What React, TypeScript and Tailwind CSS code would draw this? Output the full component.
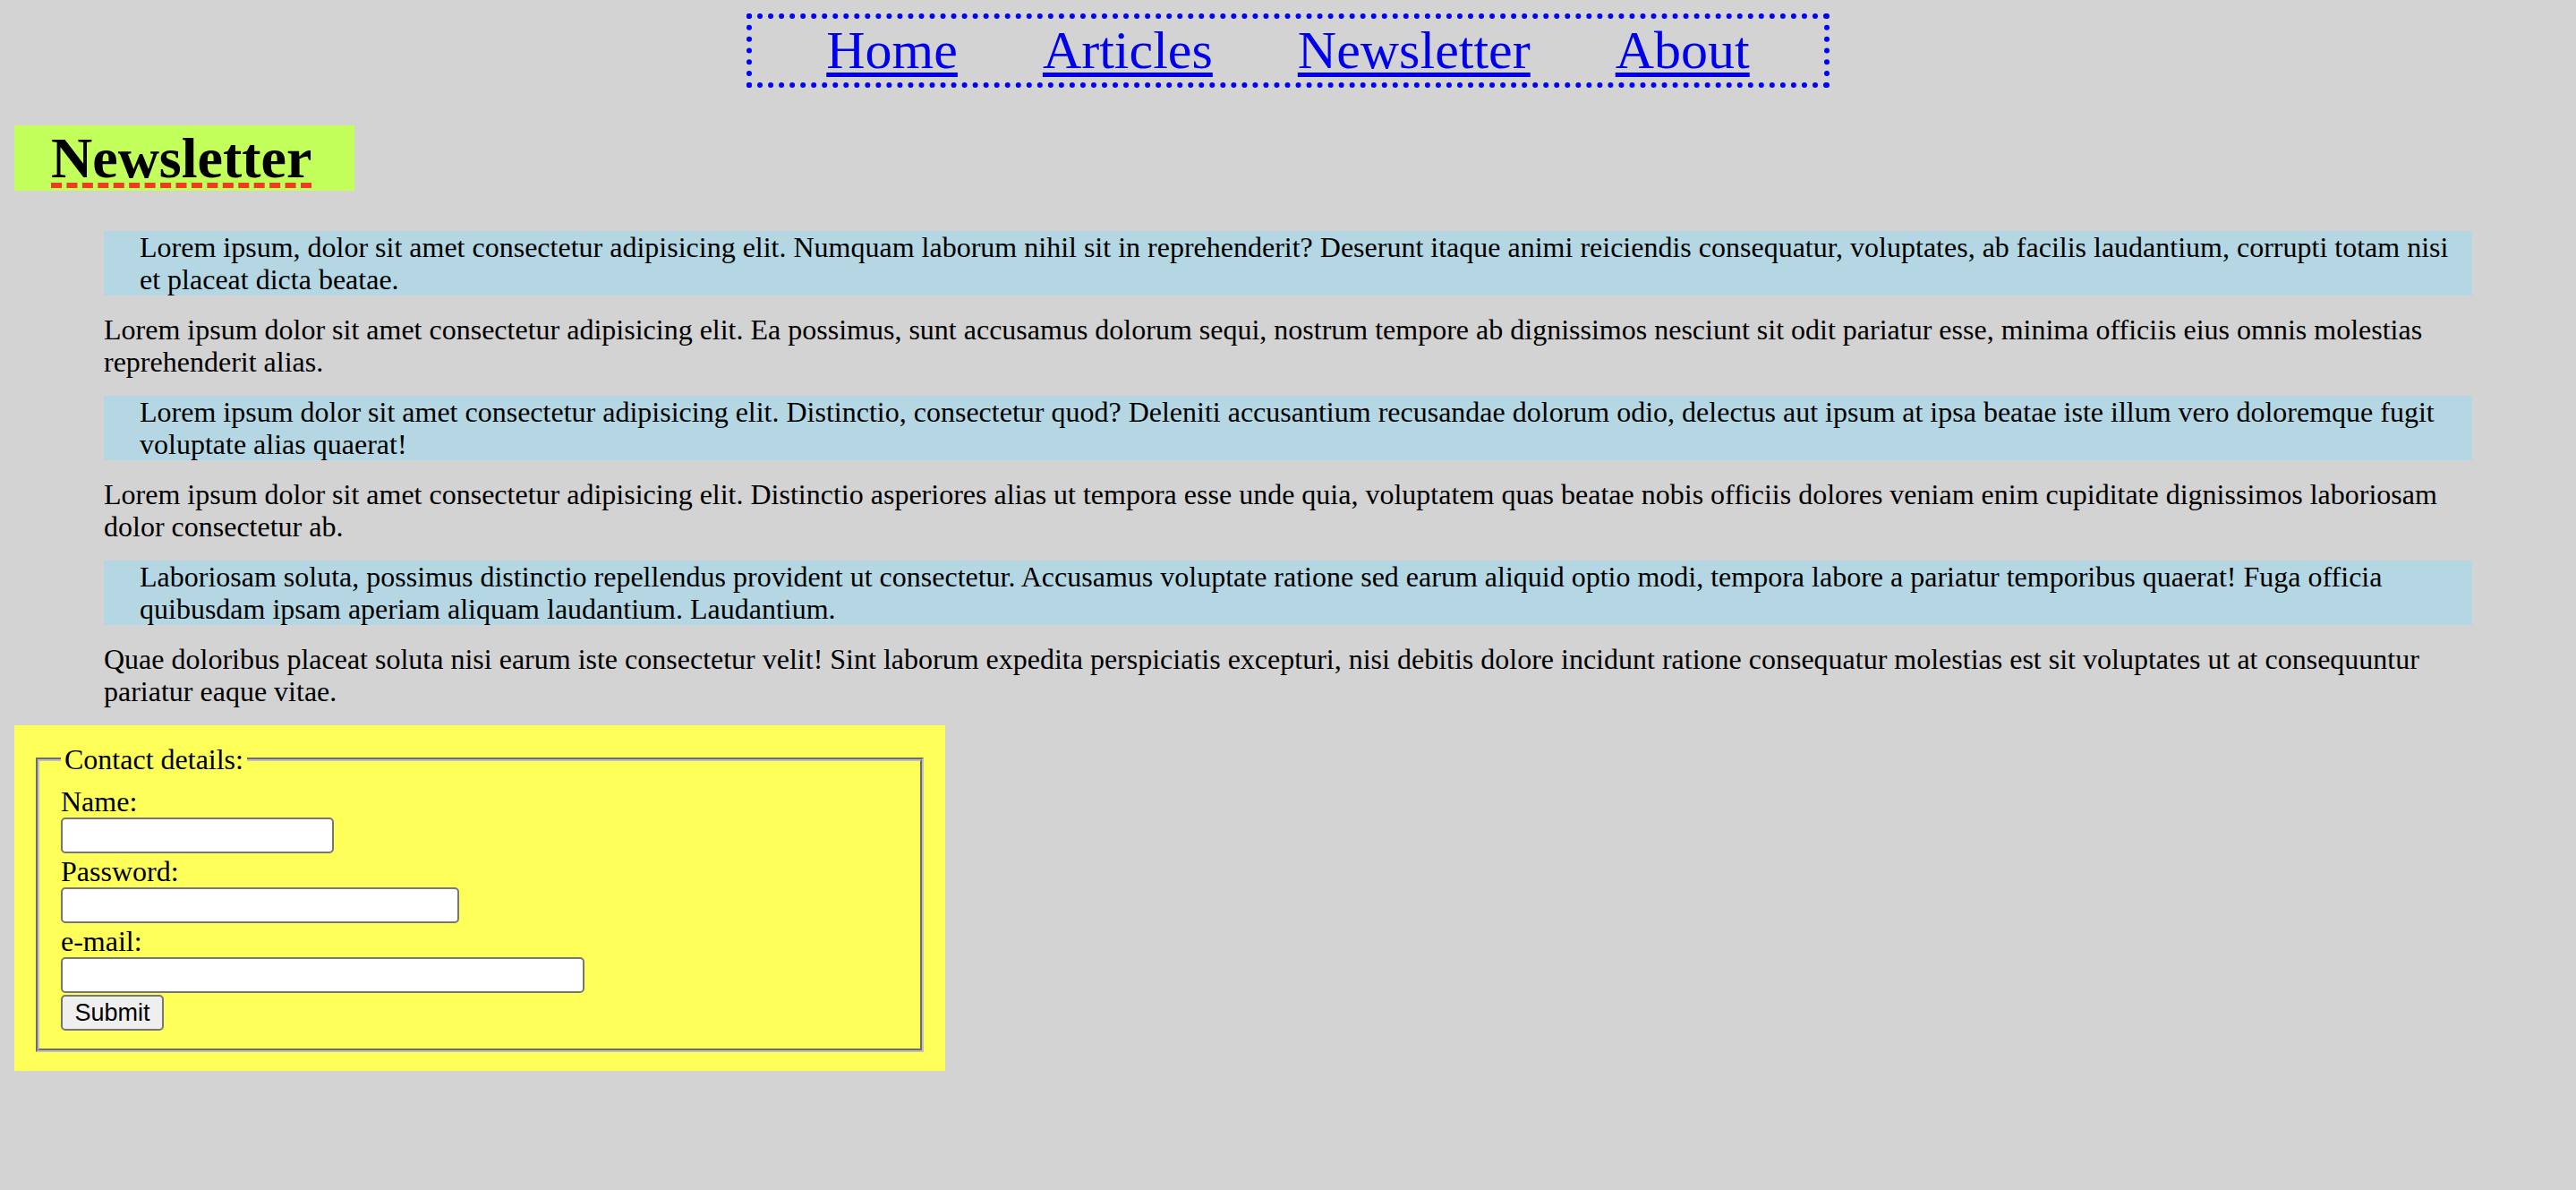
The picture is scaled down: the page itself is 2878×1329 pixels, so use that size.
import React from 'react';

const links = ['Home', 'Articles', 'Newsletter', 'About'];

const quotes = [
  'Lorem ipsum, dolor sit amet consectetur adipisicing elit. Numquam laborum nihil sit in reprehenderit? Deserunt itaque animi reiciendis consequatur, voluptates, ab facilis laudantium, corrupti totam nisi et placeat dicta beatae.',
  'Lorem ipsum dolor sit amet consectetur adipisicing elit. Distinctio, consectetur quod? Deleniti accusantium recusandae dolorum odio, delectus aut ipsum at ipsa beatae iste illum vero doloremque fugit voluptate alias quaerat!',
  'Laboriosam soluta, possimus distinctio repellendus provident ut consectetur. Accusamus voluptate ratione sed earum aliquid optio modi, tempora labore a pariatur temporibus quaerat! Fuga officia quibusdam ipsam aperiam aliquam laudantium. Laudantium.',
];

const paras = [
  'Lorem ipsum dolor sit amet consectetur adipisicing elit. Ea possimus, sunt accusamus dolorum sequi, nostrum tempore ab dignissimos nesciunt sit odit pariatur esse, minima officiis eius omnis molestias reprehenderit alias.',
  'Lorem ipsum dolor sit amet consectetur adipisicing elit. Distinctio asperiores alias ut tempora esse unde quia, voluptatem quas beatae nobis officiis dolores veniam enim cupiditate dignissimos laboriosam dolor consectetur ab.',
  'Quae doloribus placeat soluta nisi earum iste consectetur velit! Sint laborum expedita perspiciatis excepturi, nisi debitis dolore incidunt ratione consequatur molestias est sit voluptates ut at consequuntur pariatur eaque vitae.',
];

const inputClass =
  'block h-[40px] bg-white border-2 border-[#767676] rounded-[5px] mb-[2px] px-2 text-[26px]';

const App: React.FC = () => {
  return (
    <div className="min-h-screen bg-[#d3d3d3] pt-[15px] px-[16px] pb-10 text-black font-['Liberation_Serif','Times_New_Roman',serif]">
      {/* top nav */}
      <nav className="mx-auto w-fit flex gap-[95px] px-[83px] border-[6px] border-dotted border-[#0000ff]">
        {links.map((l) => (
          <a
            key={l}
            href="#"
            className="text-[60px] leading-[71px] text-[#0000ee] underline decoration-[5px] underline-offset-[5px]"
          >
            {l}
          </a>
        ))}
      </nav>

      <h1 className="mt-[42px] w-[380px] bg-[#c3ff5b] pl-[41px] text-[64px] leading-[73px] font-bold underline decoration-dashed decoration-[#ee3b24] decoration-[6px] underline-offset-[6px]">
        Newsletter
      </h1>

      <main className="mt-[45px] px-[100px] flex flex-col gap-[20px] text-[32px] leading-[36px]">
        {quotes.map((q, i) => (
          <React.Fragment key={i}>
            <blockquote className="bg-[#b4d7e3] pl-[40px]">{q}</blockquote>
            <p>{paras[i]}</p>
          </React.Fragment>
        ))}
      </main>

      <form
        className="mt-[20px] w-[1040px] bg-[#ffff5a] pt-[20px] pb-[21px] px-[24px]"
        onSubmit={(e) => e.preventDefault()}
      >
        <fieldset className="border-[4px] [border-style:groove] border-[#c0c0c0] px-[24px] pt-[11px] pb-[20px] text-[32px] leading-[36px]">
          <legend className="px-[4px] leading-[36px]">Contact details:</legend>
          <label htmlFor="name" className="block">Name:</label>
          <input id="name" type="text" className={inputClass + ' w-[305px]'} />
          <label htmlFor="pass" className="block">Password:</label>
          <input id="pass" type="password" className={inputClass + ' w-[445px]'} />
          <label htmlFor="mail" className="block">e-mail:</label>
          <input id="mail" type="email" className={inputClass + ' w-[585px]'} />
          <button
            type="submit"
            className="block mt-[1px] h-[40px] w-[115px] bg-[#efefef] border-2 border-[#767676] rounded-[5px] text-[27px] leading-none font-['Liberation_Sans',Arial,sans-serif]"
          >
            Submit
          </button>
        </fieldset>
      </form>
    </div>
  );
};

export default App;
